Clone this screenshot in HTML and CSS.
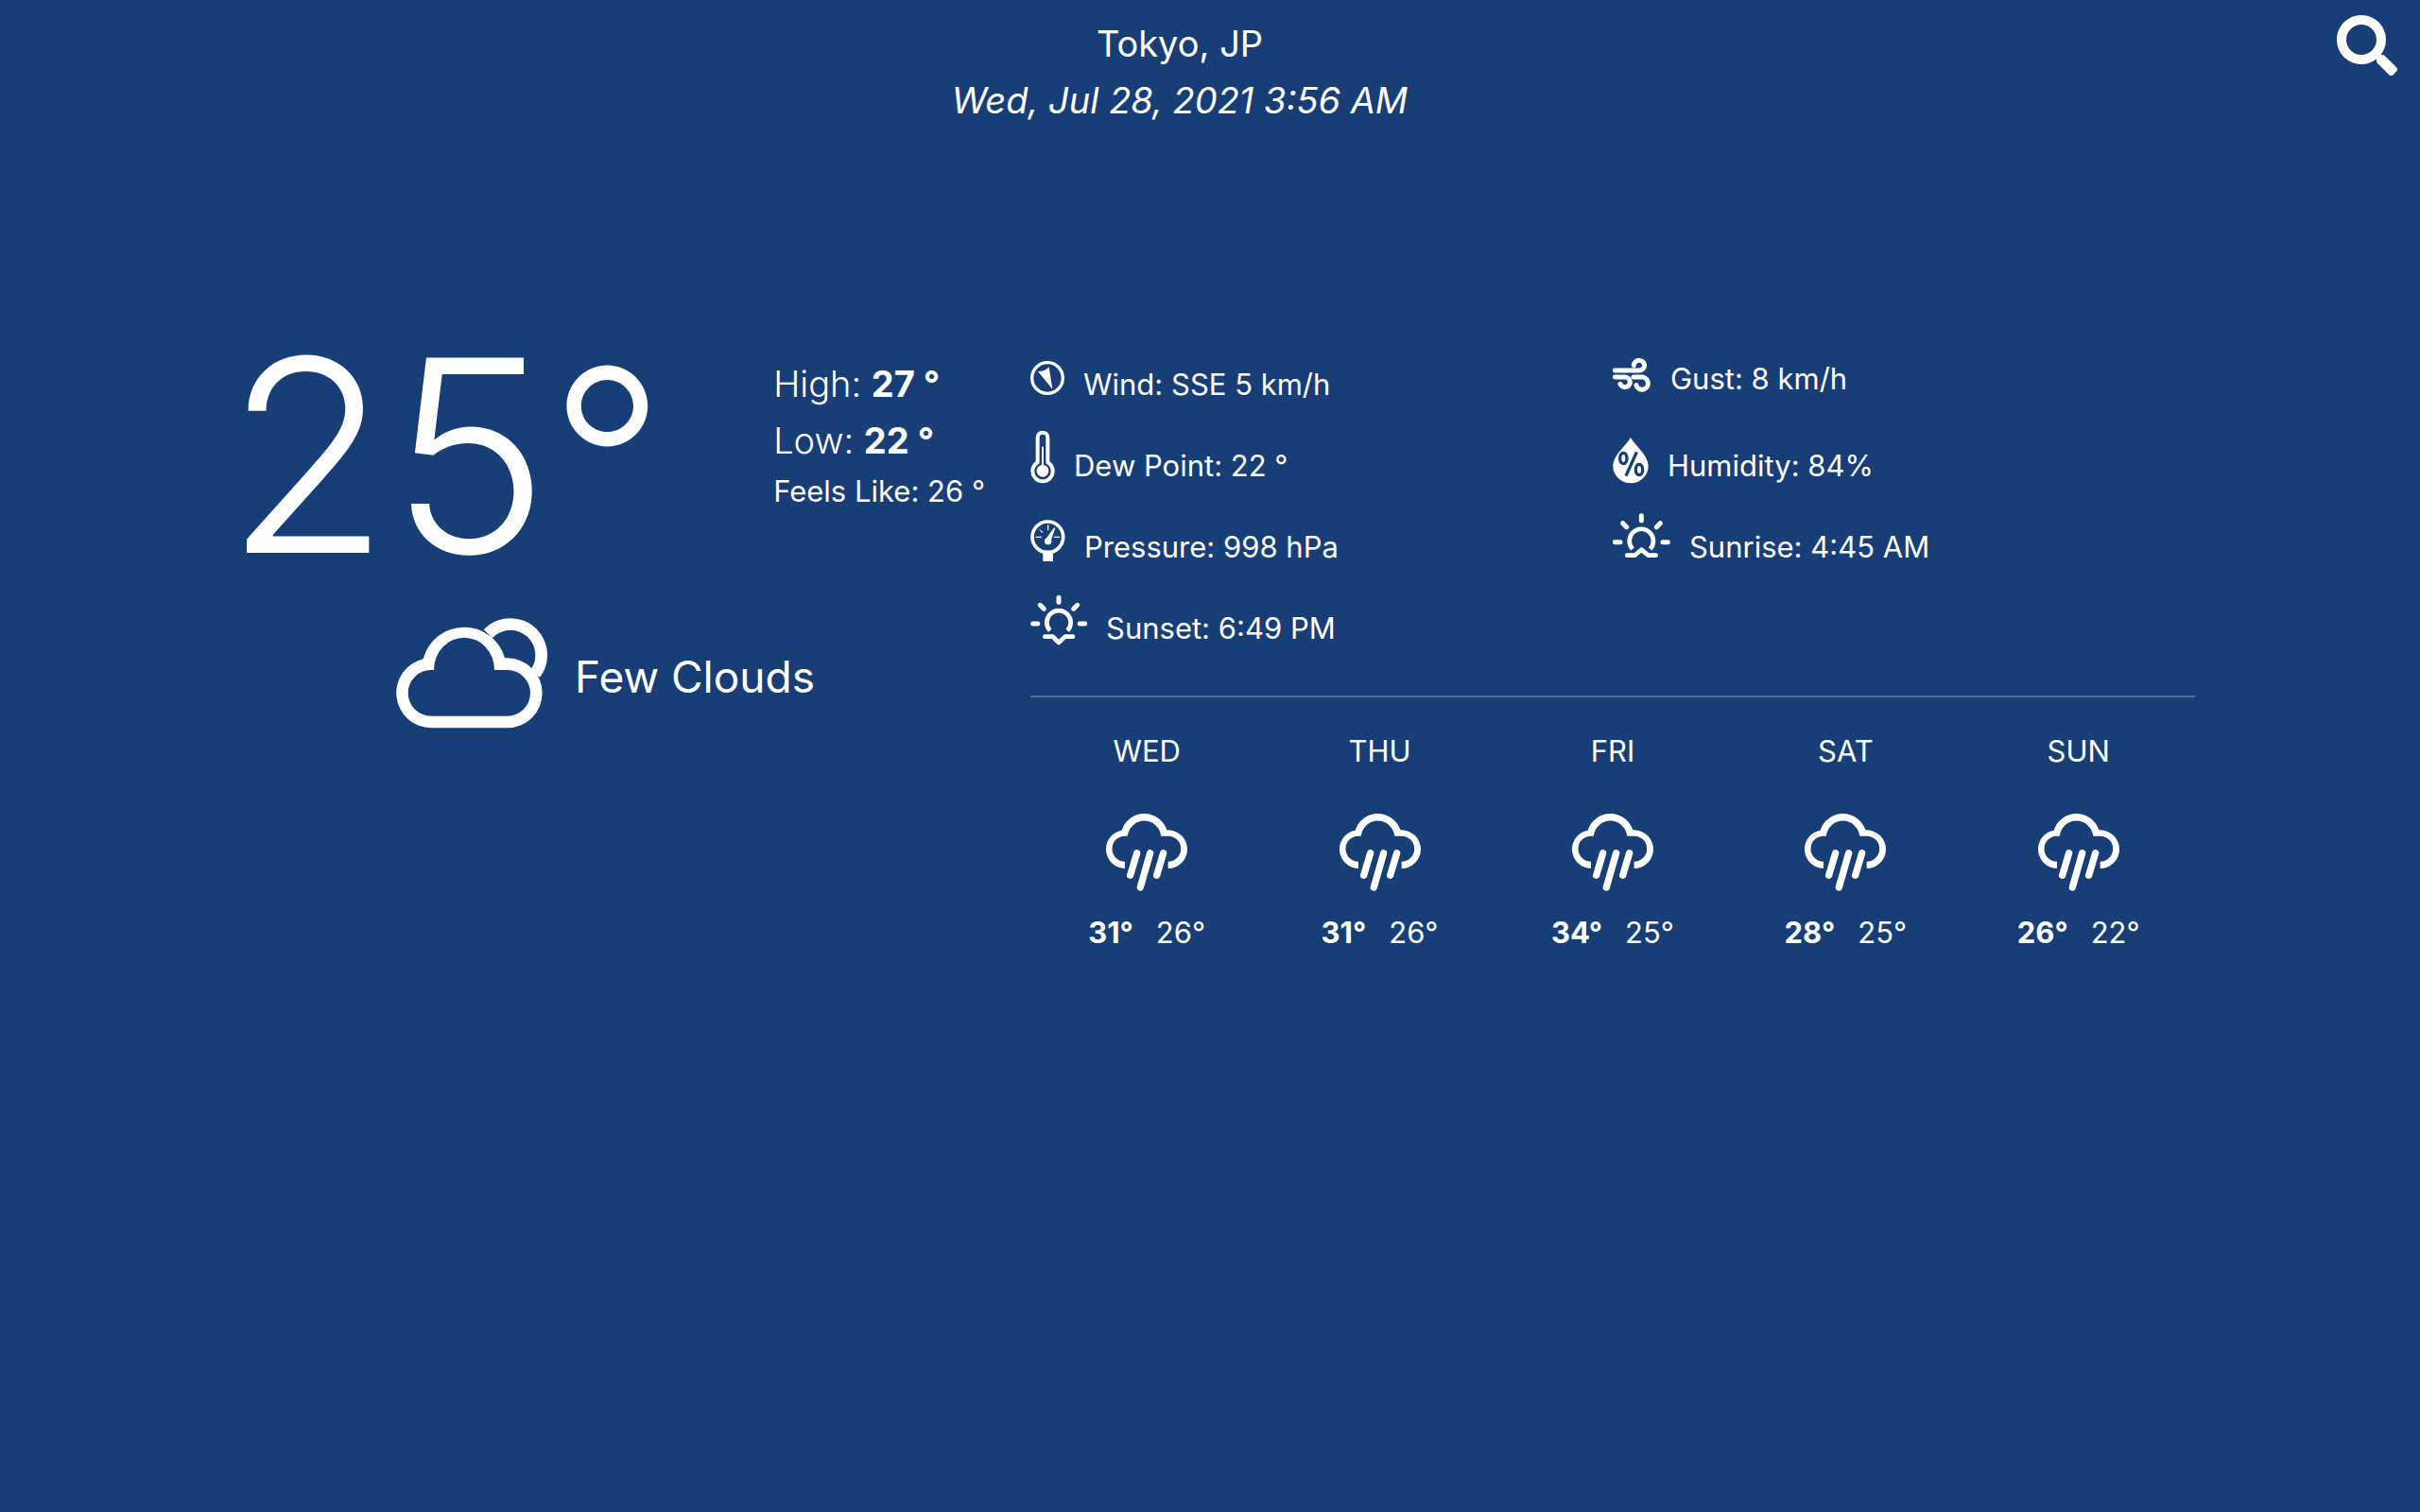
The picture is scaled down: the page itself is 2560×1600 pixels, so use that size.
FILE: index.html
```
<!DOCTYPE html>
<html lang="en">
<head>
<meta charset="utf-8">
<meta name="viewport" content="width=device-width, initial-scale=1">
<title>Weather - Tokyo, JP</title>
<link rel="stylesheet" href="styles.css">
</head>
<body>
<svg class="defs" aria-hidden="true">
  <symbol id="rain" viewBox="270 414 264 258">
    <path d="M333 600A61 61 0 0 1 323 479A75 75 0 0 1 466 478H470A61 61 0 0 1 470 600V578A40 40 0 0 0 470 497H448A54 56 0 0 0 341 497H333A40 40 0 0 0 333 578Z"/>
    <path class="line w22" d="M371 551L350 622M413 551L382 660M455 551L434 622"/>
  </symbol>
</svg>

<header class="top">
  <div class="place">
    <h1 class="city">Tokyo, JP</h1>
    <p class="date">Wed, Jul 28, 2021 3:56 AM</p>
  </div>
  <button class="search" type="button" aria-label="Search">
    <svg viewBox="0 0 512 512" width="64" height="64"><path d="M505 442.7L405.3 343c-4.5-4.5-10.6-7-17-7H372c27.6-35.3 44-79.7 44-128C416 93.1 322.9 0 208 0S0 93.1 0 208s93.1 208 208 208c48.3 0 92.7-16.4 128-44v16.3c0 6.4 2.5 12.5 7 17l99.7 99.7c9.4 9.4 24.6 9.4 33.9 0l28.3-28.3c9.4-9.4 9.4-24.6.1-34zM208 336c-70.7 0-128-57.2-128-128 0-70.7 57.2-128 128-128 70.7 0 128 57.2 128 128 0 70.7-57.2 128-128 128z"/></svg>
  </button>
</header>

<main class="weather">
  <section class="now">
    <div class="temps">
      <p class="current">25<span class="degree">°</span></p>
      <div class="range">
        <p class="limit">High: <b>27 °</b></p>
        <p class="limit">Low: <b>22 °</b></p>
        <p class="feels">Feels Like: 26 °</p>
      </div>
    </div>
    <div class="sky">
      <svg viewBox="66 68 486 378" width="162" height="126">
        <path fill-rule="evenodd" d="M155 201A134 134 0 0 1 414 198H422A111 111 0 0 1 422 420H180A111 111 0 0 1 155 201ZM189 236A96 103 0 0 1 381 236H422A73 73 0 0 1 422 382H180A73 73 0 0 1 180 236Z"/>
        <path class="line w38" d="M361 121A98 98 0 0 1 530 187A98 98 0 0 1 510 248"/>
      </svg>
      <p class="sky-name">Few Clouds</p>
    </div>
  </section>

  <section class="more">
    <ul class="details">
      <li class="detail">
        <svg viewBox="30 0 108 180" width="36" height="60"><circle class="line w10" cx="84" cy="90" r="49"/><path d="M54 69Q77 70 89 55L100 125Z"/></svg>
        <span>Wind: SSE 5 km/h</span>
      </li>
      <li class="detail">
        <svg viewBox="50 0 123 162" width="41" height="54"><path class="line w15" d="M57 66H132A17 16 0 1 0 117 50M57 87H88A16 16 0 1 1 74 109M116 87H145A19 20 0 1 1 125 113"/></svg>
        <span>Gust: 8 km/h</span>
      </li>
      <li class="detail">
        <svg viewBox="32 258 78 180" width="26" height="60"><path class="line w12" d="M55 358V279A16 16 0 0 1 87 279V358A32 32 0 1 1 55 358Z"/><circle cx="71" cy="385" r="19"/><path d="M68 308H74V375H68Z"/></svg>
        <span>Dew Point: 22 °</span>
      </li>
      <li class="detail">
        <svg viewBox="48 258 114 180" width="38" height="60"><path d="M105 279C91 304 49 335 49 370A56 54 0 0 0 161 370C161 335 119 304 105 279Z"/><g class="cut"><ellipse cx="82" cy="345" rx="11" ry="17"/><ellipse cx="132" cy="381" rx="11" ry="17"/><path d="M124 325L90 401"/></g></svg>
        <span>Humidity: 84%</span>
      </li>
      <li class="detail">
        <svg viewBox="32 36 111 180" width="37" height="60"><circle class="line w11" cx="87" cy="115" r="49"/><path d="M72 158H104V192H72Z"/><path class="line w4" d="M50 115H66M108 115H124M88 78V92"/><path d="M58 88L72 99L69 102Z"/><circle cx="88" cy="128" r="11"/><path d="M80 122L108 84L111 87L95 131Z"/></svg>
        <span>Pressure: 998 hPa</span>
      </li>
      <li class="detail">
        <svg viewBox="51 516 183 180" width="61" height="60"><path class="line w15" d="M142 527V543M58 611H75M210 611H226M83 551L95 563M202 551L190 563"/><path class="line w14" d="M97 653H121L142 635L164 653H188"/><path class="arc w14" d="M114 633A38 38 0 1 1 170 633"/></svg>
        <span>Sunrise: 4:45 AM</span>
      </li>
      <li class="detail">
        <svg viewBox="33 294 180 180" width="60" height="60"><path class="line w15" d="M123 307V322M41 390H56M190 390H206M64 331L76 343M182 331L170 343"/><path class="line w14" d="M79 431H104L123 450L143 431H168"/><path class="arc w14" d="M95 412A38 38 0 1 1 151 412"/></svg>
        <span>Sunset: 6:49 PM</span>
      </li>
    </ul>

    <ol class="forecast">
      <li class="day"><h2 class="day-name">WED</h2><svg class="day-icon"><use href="#rain"/></svg><p class="day-temps"><b>31°</b><span>26°</span></p></li>
      <li class="day"><h2 class="day-name">THU</h2><svg class="day-icon"><use href="#rain"/></svg><p class="day-temps"><b>31°</b><span>26°</span></p></li>
      <li class="day"><h2 class="day-name">FRI</h2><svg class="day-icon"><use href="#rain"/></svg><p class="day-temps"><b>34°</b><span>25°</span></p></li>
      <li class="day"><h2 class="day-name">SAT</h2><svg class="day-icon"><use href="#rain"/></svg><p class="day-temps"><b>28°</b><span>25°</span></p></li>
      <li class="day"><h2 class="day-name">SUN</h2><svg class="day-icon"><use href="#rain"/></svg><p class="day-temps"><b>26°</b><span>22°</span></p></li>
    </ol>
  </section>
</main>
</body>
</html>
```
FILE: styles.css
```
* {
  box-sizing: border-box;
  margin: 0;
  padding: 0;
}

body {
  min-height: 100vh;
  background: #183e78;
  color: #fff;
  font: 400 31px/48px Inter, "Liberation Sans", sans-serif;
}

ul,
ol {
  list-style: none;
}

svg {
  display: block;
  flex: none;
  fill: currentColor;
}

.defs {
  position: absolute;
  width: 0;
  height: 0;
}

/* icon strokes */
.line,
.arc {
  fill: none;
  stroke: currentColor;
  stroke-linejoin: round;
}

.line {
  stroke-linecap: round;
}

.w4 { stroke-width: 4; }
.w10 { stroke-width: 10; }
.w11 { stroke-width: 11; }
.w12 { stroke-width: 12; }
.w14 { stroke-width: 14; }
.w15 { stroke-width: 15; }
.w22 { stroke-width: 22; }
.w38 { stroke-width: 38; stroke-linecap: butt; }

.cut {
  fill: none;
  stroke: #183e78;
  stroke-width: 10;
}

/* header */
.top {
  display: flex;
  align-items: flex-start;
  padding: 16px 24px;
}

.place {
  flex: 1;
  text-align: center;
}

.city,
.date {
  font-size: 38px;
  line-height: 60px;
  font-weight: 400;
}

.date {
  font-style: italic;
}

.search {
  border: 0;
  background: none;
  color: inherit;
  cursor: pointer;
}

/* main */
.weather {
  display: grid;
  grid-template-columns: 804fr 1232fr;
  gap: 48px;
  width: 81.4%;
  margin: 0 auto;
  padding: 218px 0 48px;
}

.temps {
  display: grid;
  grid-template-columns: 583fr 221fr;
  white-space: nowrap;
}

.current {
  font-size: 284px;
  line-height: 224px;
  font-weight: 300;
}

.degree {
  font-size: 270px;
}

.range {
  padding-top: 6px;
}

.limit {
  font-size: 38px;
  line-height: 60px;
  font-weight: 300;
}

b {
  font-weight: 700;
}

.sky {
  display: flex;
  justify-content: center;
  align-items: center;
  gap: 28px;
  margin-top: 54px;
}

.sky-name {
  font-size: 46px;
  line-height: 72px;
}

.details {
  display: grid;
  grid-template-columns: 1fr 1fr;
  grid-auto-rows: 86px;
  align-items: start;
  padding-bottom: 22px;
  border-bottom: 2px solid rgba(255, 255, 255, 0.25);
}

.detail {
  display: flex;
  align-items: flex-end;
  gap: 20px;
  line-height: 46px;
}

.forecast {
  display: grid;
  grid-template-columns: repeat(5, 1fr);
  padding-top: 33px;
}

.day {
  display: flex;
  flex-direction: column;
  align-items: center;
}

.day-name {
  font-size: 31px;
  font-weight: 400;
}

.day-icon {
  width: 88px;
  height: 86px;
  margin: 38px 0 20px;
}

.day-temps {
  display: flex;
  gap: 24px;
}
```
